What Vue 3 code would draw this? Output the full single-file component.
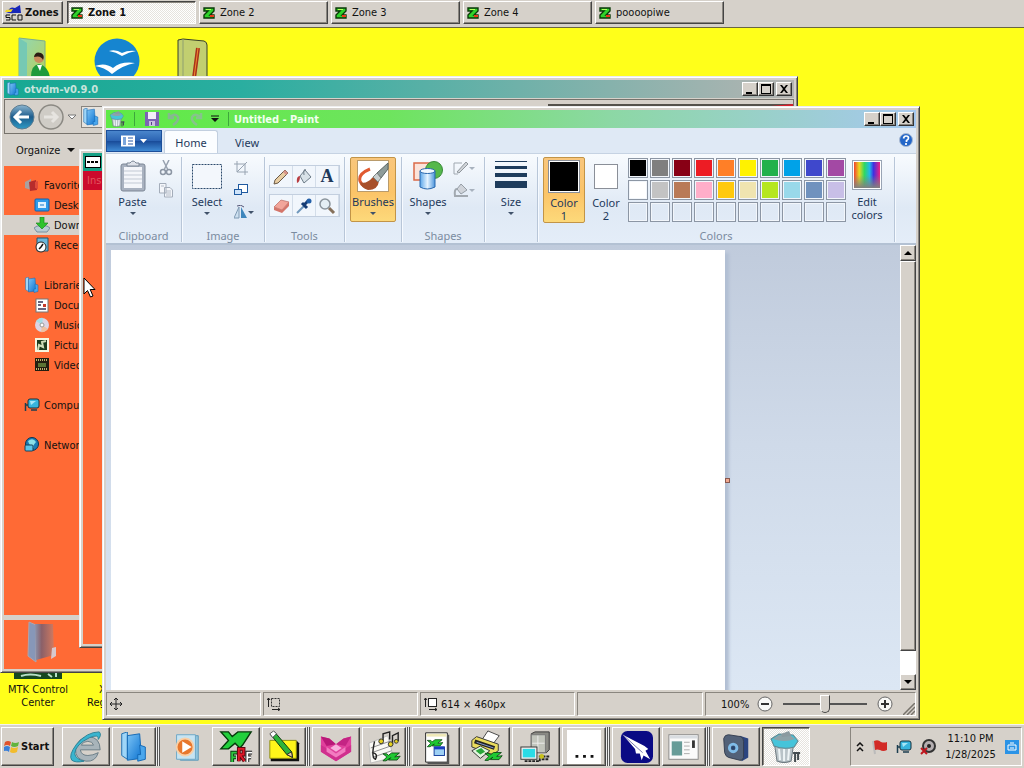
<template>
  <div class="screen">
    <svg class="defs" aria-hidden="true">
      <defs>
        <linearGradient id="blueGlass" x1="0" y1="0" x2="0" y2="1">
          <stop offset="0" stop-color="#8cb6d0" />
          <stop offset="0.5" stop-color="#1d5c8c" />
          <stop offset="1" stop-color="#2e9bc6" />
        </linearGradient>
        <linearGradient id="greenGlass" x1="0" y1="0" x2="1" y2="1">
          <stop offset="0" stop-color="#8fd8b8" />
          <stop offset="1" stop-color="#b9cf5a" />
        </linearGradient>
        <linearGradient id="folderBlue" x1="0" y1="0" x2="1" y2="1">
          <stop offset="0" stop-color="#7cc4f6" />
          <stop offset="1" stop-color="#0b72d0" />
        </linearGradient>
        <linearGradient id="darkFolder" x1="0" y1="0" x2="1" y2="0">
          <stop offset="0" stop-color="#8a93ad" />
          <stop offset="0.35" stop-color="#8b6068" />
          <stop offset="1" stop-color="#d07a60" />
        </linearGradient>
        <linearGradient id="rainbow">
          <stop offset="0" stop-color="#f04030" />
          <stop offset="0.2" stop-color="#e8d820" />
          <stop offset="0.4" stop-color="#30d860" />
          <stop offset="0.6" stop-color="#20b8e8" />
          <stop offset="0.75" stop-color="#4030e0" />
          <stop offset="1" stop-color="#f02080" />
        </linearGradient>
        <linearGradient id="fadeGray" x1="0" y1="0" x2="0" y2="1">
          <stop offset="0.5" stop-color="#808080" stop-opacity="0" />
          <stop offset="1" stop-color="#808080" />
        </linearGradient>
        <linearGradient id="cylinder">
          <stop offset="0" stop-color="#5aa6ea" />
          <stop offset="0.5" stop-color="#e4f3ff" />
          <stop offset="1" stop-color="#4a94dc" />
        </linearGradient>
      </defs>
      <symbol id="i-zone" viewBox="0 0 12 12">
        <path d="M1 1H11V4L7 8H11V11H1V8L5 4H1Z" fill="#2fd32a" stroke="#0b3a08" stroke-width="1.4" />
        <path d="M7 8H11V10H7Z" fill="#e83a1a" />
        <path d="M3 2.5H8" stroke="#b8ff60" />
      </symbol>
      <symbol id="i-bin" viewBox="0 0 32 32">
        <path d="M5 10L8 30Q15 33 22 30L25 10Z" fill="#b9c3c8" stroke="#6e7a80" />
        <path d="M10 18L11 29M15 18V30M20 18L19 29" stroke="#eef4f6" stroke-width="2" />
        <path d="M2 8L10 3L24 4L29 10L25 16Q15 19 5 15Z" fill="#45c4da" stroke="#5f8790" />
        <path d="M4 8L10 4L22 5L26 8Q15 12 4 8Z" fill="#8ea2a8" />
        <path d="M12 3L20 0L22 5L13 6Z" fill="#8b9aa0" />
        <path d="M26 21V31M29 21V29M24 22H31" stroke="#444c50" stroke-width="2" />
      </symbol>
      <symbol id="i-folder" viewBox="0 0 32 32">
        <path d="M3 2L9 0V29L3 25Z" fill="#9fd6f8" stroke="#1d6db0" />
        <path d="M9 4L22 2L24 28L9 30Z" fill="url(#folderBlue)" stroke="#1267b4" />
        <path d="M22 14L28 16V29L20 31V24H23Z" fill="#4aa6ec" stroke="#1267b4" />
      </symbol>
      <symbol id="i-pc" viewBox="0 0 16 16">
        <rect x="4" y="2" width="11" height="9" rx="2" fill="#37b4dc" stroke="#16303c" />
        <path d="M6 4H12L7 8Z" fill="#a5e6f6" />
        <path d="M7 13H13M1.500 6V14M1 8H4" stroke="#1c3e50" stroke-width="1.500" />
      </symbol>
      <symbol id="i-net" viewBox="0 0 16 16">
        <circle cx="8" cy="7" r="6.500" fill="#1b7cb6" stroke="#0c3350" />
        <path d="M4 4Q9 0 12 5Q8 9 10 11Q6 10 4 4Z" fill="#8be0e8" />
        <rect x="1" y="8" width="8" height="6" rx="1" fill="#5cc3e8" stroke="#17425a" />
      </symbol>
      <symbol id="i-xv" viewBox="0 0 24 12">
        <path d="M1 2H6L8 4L12 1H22L16 6L23 5L19 10H8L11 7L5 11H1L6 6Z" fill="#1fc832" stroke="#063b0c" />
      </symbol>
    </svg>

    <header class="zones-bar">
      <button class="raised zones-btn">
        <svg width="18" height="16" viewBox="0 0 18 16">
          <path d="M3 6Q5 1 10 3L15 0L16 8L9 8Q5 9 1 7Z" fill="#1726b8" />
          <path d="M1 5L8 4L6 7H0Z" fill="#f1d928" />
          <path d="M5 10H1V12.500H5V15H1M11 10H7V15H11M13 10H17V15H13Z" fill="none" stroke="#111" />
        </svg>
        Zones
      </button>
      <nav class="zone-tabs">
        <button v-for="(zone, i) in zones" :key="zone" class="zone-tab" :class="i === activeZone ? 'pressed' : 'raised'" @click="activeZone = i">
          <svg width="12" height="12"><use href="#i-zone" /></svg>
          {{ zone }}
        </button>
      </nav>
    </header>

    <main class="desktop">
      <svg class="desk-icon user" viewBox="0 0 36 40">
        <path d="M2 1L28 4V40H2Z" fill="url(#greenGlass)" stroke="#7dae8c" />
        <path d="M2 1L10 6V40H2Z" fill="#76c9b4" />
        <circle cx="22" cy="21" r="5" fill="#c98d5e" />
        <path d="M17 20Q18 14 24 16Q28 18 26 23Q24 18 17 20Z" fill="#2b1c12" />
        <path d="M14 40Q14 28 22 27Q31 29 33 40Z" fill="#1f9a3c" />
        <path d="M20 28L23 34L25 28Z" fill="#fff" />
      </svg>
      <svg class="desk-icon office" viewBox="0 0 46 46">
        <circle cx="23" cy="23" r="22.500" fill="#1685d0" />
        <path d="M15 13Q22 11 28 15Q34 12 42 13Q35 14 28 18Q22 14 15 13ZM1 28Q11 24 19 30Q27 23 41 25Q29 27 18 36Q10 29 1 28Z" fill="#fff" />
      </svg>
      <svg class="desk-icon book" viewBox="0 0 32 40">
        <path d="M1 2L6 1L27 3Q30 4 30 7V40H1Z" fill="#c2cf70" stroke="#38402a" />
        <path d="M6 1V40" stroke="#8fa070" />
        <path d="M21 10L17 40" stroke="#a8321a" stroke-width="4" />
        <path d="M21 10L17 40" stroke="#f08a30" />
      </svg>
      <div class="desk-item mtk">
        <svg width="48" height="10" viewBox="0 0 48 10">
          <rect width="48" height="10" fill="#16481f" />
          <path d="M7 7Q16 4 27 7M34 5L38 8M42 4V8" stroke="#b8e0c8" stroke-width="2" fill="none" />
        </svg>
        <span>MTK Control Center</span>
      </div>
      <div class="desk-item reg"><span>XV</span><span>Reg</span></div>

      <section class="window explorer">
        <div class="titlebar teal">
          <svg width="14" height="16" viewBox="0 0 32 32"><use href="#i-folder" /></svg>
          <h2>otvdm-v0.9.0</h2>
          <WindowButtons />
        </div>
        <div class="nav-row">
          <button class="round" aria-label="Back">
            <svg width="26" height="26" viewBox="0 0 26 26">
              <circle cx="13" cy="13" r="12" fill="url(#blueGlass)" stroke="#5e7c90" />
              <path d="M12 7L6 13L12 19M7 13H20" fill="none" stroke="#fff" stroke-width="3" />
            </svg>
          </button>
          <button class="round" aria-label="Forward">
            <svg width="26" height="26" viewBox="0 0 26 26">
              <circle cx="13" cy="13" r="12" fill="#cfccc6" stroke="#8b8983" stroke-width="1.500" />
              <path d="M14 8L19 13L14 18M6 13H18" fill="none" stroke="#e6e4e0" stroke-width="3" />
            </svg>
          </button>
          <svg width="10" height="6" viewBox="0 0 10 6"><path d="M1 1H9L5 5Z" fill="#fff" stroke="#777" /></svg>
          <div class="address">
            <svg width="18" height="18" viewBox="0 0 32 32"><use href="#i-folder" /></svg>
          </div>
          <div class="search"></div>
        </div>
        <div class="organize-row">
          <button class="plain">Organize <span class="caret"></span></button>
          <span class="dash"></span>
        </div>
        <ul class="tree">
          <li v-for="item in tree" :key="item.label" :class="[item.kind, { selected: item.selected }]">
            <svg width="16" height="16" viewBox="0 0 16 16">
              <template v-if="item.icon === 'fav'">
                <path d="M1 5L7 2V13L1 11Z" fill="#a8a0a0" /><path d="M5 5L12 3L13 13L6 14Z" fill="#b62c2c" /><path d="M11 5L14 4V12L11 11Z" fill="#e04a3a" />
              </template>
              <template v-else-if="item.icon === 'desk'">
                <rect x="1" y="2" width="14" height="12" rx="1" fill="#2f9bea" stroke="#0f5fae" /><rect x="4" y="5" width="8" height="6" fill="#dff2ff" /><path d="M6 8H10" stroke="#1a78c8" />
              </template>
              <template v-else-if="item.icon === 'down'">
                <path d="M0 11L3 9H13L16 11L13 15H3Z" fill="#b8ccd4" stroke="#7890a0" /><path d="M6 0H10V6H14L8 12L2 6H6Z" fill="#2dc32d" stroke="#1d8a20" stroke-width="0.700" />
              </template>
              <template v-else-if="item.icon === 'recent'">
                <path d="M3 1H14V14H3Z" fill="#6cb6da" stroke="#24566e" /><circle cx="7" cy="10" r="5" fill="#fff" stroke="#222" /><path d="M9 7L7 10L5 12" fill="none" stroke="#111" stroke-width="1.500" />
              </template>
              <use v-else-if="item.icon === 'lib'" href="#i-folder" />
              <template v-else-if="item.icon === 'docs'">
                <rect x="2" y="2" width="12" height="13" fill="#fff" stroke="#777" /><path d="M4 5H9M4 8H7M4 12H12" stroke="#335" stroke-width="1.500" /><path d="M9 7H12V10H9Z" fill="#c63a2a" />
              </template>
              <template v-else-if="item.icon === 'music'">
                <circle cx="8" cy="8" r="7" fill="#dcd4e4" /><path d="M8 8L2 4Q6 0 9 1Z" fill="#a6dce6" /><path d="M8 8L14 12Q10 16 7 15Z" fill="#f0c0a0" /><circle cx="8" cy="8" r="2" fill="#fff" stroke="#999" />
              </template>
              <template v-else-if="item.icon === 'pics'">
                <rect x="1" y="1" width="14" height="14" fill="#f6f6e0" /><rect x="3" y="3" width="10" height="10" fill="#1d3a1c" /><path d="M4 13L5 8L9 10L8 5L12 4" stroke="#d0deb8" fill="none" stroke-width="2" />
              </template>
              <template v-else-if="item.icon === 'video'">
                <rect x="1" y="1" width="14" height="13" fill="#241e10" /><path d="M2 3H14M2 12H14" stroke="#c0b070" stroke-dasharray="1 1" stroke-width="2" /><path d="M4 6H12V10H4Z" fill="#5c7434" />
              </template>
              <use v-else-if="item.icon === 'pc'" href="#i-pc" />
              <use v-else href="#i-net" />
            </svg>
            {{ item.label }}
          </li>
        </ul>
        <div class="details">
          <svg width="34" height="42" viewBox="0 0 34 42">
            <path d="M5 1L12 4V41L4 35Z" fill="#8797b8" stroke="#b0a4ac" />
            <path d="M11 3L29 3L30 34L12 39Z" fill="url(#darkFolder)" />
            <path d="M28 27L32 26V35L27 38" fill="#d8c8cc" />
          </svg>
        </div>
      </section>

      <section class="window installer">
        <div class="installer-title">
          <svg width="16" height="12" viewBox="0 0 16 12"><rect x="0.500" y="0.500" width="15" height="11" fill="#fff" stroke="#000" /><path d="M2 6H9M10 6H14" stroke="#000" stroke-width="2" stroke-dasharray="3 1" /></svg>
        </div>
        <div class="installer-head">Ins</div>
      </section>

      <section class="window paint">
        <div class="titlebar lime">
          <svg width="18" height="16" viewBox="0 0 32 32"><use href="#i-bin" /></svg>
          <span class="bar"></span>
          <button class="plain quick" aria-label="Save">
            <svg width="14" height="14" viewBox="0 0 14 14"><path d="M0 0H14V14H0Z" fill="#7c62b4" /><path d="M3 0H11V7H3Z" fill="#f2eef8" /><path d="M4 9H10V14H4Z" fill="#c9bfe0" /><path d="M6 10H7V13H6Z" fill="#54408a" /></svg>
          </button>
          <button class="plain quick" aria-label="Undo">
            <svg width="14" height="14" viewBox="0 0 14 14"><path d="M2 1V6H7M2 6Q8 0 11 5Q12 9 6 13" fill="none" stroke="#86b890" stroke-width="2.500" /></svg>
          </button>
          <button class="plain quick" aria-label="Redo">
            <svg width="14" height="14" viewBox="0 0 14 14"><path d="M12 1V6H7M12 6Q6 0 3 5Q2 9 8 13" fill="none" stroke="#86c48c" stroke-width="2.500" /></svg>
          </button>
          <button class="plain quick" aria-label="Customize">
            <svg width="8" height="8" viewBox="0 0 8 8"><path d="M0 1H8" stroke="#111" /><path d="M0 3H8L4 7Z" fill="#111" /></svg>
          </button>
          <span class="bar"></span>
          <h1>Untitled - Paint</h1>
          <WindowButtons />
        </div>

        <div class="tabs">
          <button class="file-btn" aria-label="Paint menu">
            <svg width="26" height="12" viewBox="0 0 26 12"><rect x="0" y="0.500" width="14" height="11" fill="#fff" /><path d="M2 2H5V10H2Z" fill="#7ba6dc" /><path d="M7 3H12M7 6H12M7 9H12" stroke="#2a5aa8" /><path d="M19 4H26L22.500 8Z" fill="#fff" /></svg>
          </button>
          <button class="tab active">Home</button>
          <button class="tab">View</button>
          <button class="plain help" aria-label="Help">
            <svg width="14" height="14" viewBox="0 0 14 14"><circle cx="7" cy="7" r="6.500" fill="#2366c8" stroke="#a8b8d0" /><path d="M4.500 5.500Q5 3 7 3Q9.500 3 9.500 5Q9.500 6.500 7.500 7.500V9M7 10V12" stroke="#fff" stroke-width="1.700" fill="none" /></svg>
          </button>
        </div>

        <div class="ribbon">
          <div class="group clipboard">
            <div class="tools">
              <button class="big">
                <svg width="26" height="32" viewBox="0 0 26 32">
                  <rect x="1" y="4" width="24" height="27" rx="2" fill="#a9b2c0" stroke="#7c8796" />
                  <rect x="4" y="7" width="18" height="21" fill="#f4f6fa" />
                  <path d="M4 11H22M4 15H22M4 19H22M4 23H22" stroke="#c2c9d4" />
                  <path d="M7 6V3H10Q13 -1 16 3H19V6Z" fill="#dfe3ea" stroke="#7c8796" />
                </svg>
                <span>Paste</span><i class="drop"></i>
              </button>
              <div class="small-col">
                <button class="plain" aria-label="Cut"><svg width="16" height="16" viewBox="0 0 16 16"><path d="M5 0L10 10M11 0L6 10" stroke="#98a2b0" stroke-width="1.500" /><circle cx="5" cy="12" r="2.500" fill="none" stroke="#8c96a4" stroke-width="1.500" /><circle cx="11" cy="12" r="2.500" fill="none" stroke="#8c96a4" stroke-width="1.500" /></svg></button>
                <button class="plain" aria-label="Copy"><svg width="16" height="16" viewBox="0 0 16 16"><path d="M1.500 1.500H8V11H1.500ZM6.500 5.500H12L14.500 8V15H6.500Z" fill="#f4f6fa" stroke="#a4adba" /><path d="M8 9H13M8 11H13M8 13H13M3 4H6" stroke="#b4bcc8" /></svg></button>
              </div>
            </div>
            <div class="caption">Clipboard</div>
          </div>

          <div class="group image">
            <div class="tools">
              <button class="big">
                <svg width="32" height="32" viewBox="0 0 32 32"><rect x="1.500" y="4.500" width="29" height="24" fill="#f3f7fc" stroke="#2c4a6c" stroke-dasharray="2 1" /></svg>
                <span>Select</span><i class="drop"></i>
              </button>
              <div class="small-col">
                <button class="plain" aria-label="Crop"><svg width="14" height="14" viewBox="0 0 14 14"><path d="M3 0V11H14M0 3H11V14M3 11L13 1" fill="none" stroke="#98a4b2" /></svg></button>
                <button class="plain" aria-label="Resize"><svg width="14" height="14" viewBox="0 0 14 14"><rect x="4.500" y="1.500" width="9" height="8" fill="#fff" stroke="#1f5aa0" /><rect x="0.500" y="6.500" width="7" height="5" fill="#cfe4fa" stroke="#1f5aa0" /></svg></button>
                <button class="plain with-drop" aria-label="Rotate"><svg width="14" height="14" viewBox="0 0 14 14"><path d="M7 2V13H13Z" fill="#3e86bc" /><path d="M5 2V13H0Z" fill="#cde0f0" stroke="#7f9ab4" /><path d="M3 1Q7 -1 10 2" fill="none" stroke="#557" /></svg><i class="drop"></i></button>
              </div>
            </div>
            <div class="caption">Image</div>
          </div>

          <div class="group toolset">
            <div class="tools rows">
              <div class="tool-row">
                <button aria-label="Pencil"><svg width="18" height="18" viewBox="0 0 18 18"><path d="M3 12L13 2L16 5L6 15L2 16Z" fill="#e8cda2" stroke="#6a5a48" /><path d="M13 2L16 5L14 7L11 4Z" fill="#d8938a" /></svg></button>
                <button aria-label="Fill"><svg width="18" height="18" viewBox="0 0 18 18"><path d="M5 8L10 2L16 9L9 15Z" fill="#d8e2e8" stroke="#6d7c88" /><path d="M9 7Q8 0 11 2" fill="none" stroke="#6d7c88" /><path d="M5 8Q1 8 2 15Q5 14 5 8L8 6Z" fill="#b83c40" /></svg></button>
                <button class="letter" aria-label="Text">A</button>
              </div>
              <div class="tool-row">
                <button aria-label="Eraser"><svg width="18" height="18" viewBox="0 0 18 18"><path d="M2 10L9 3L17 5L10 13Z" fill="#f2a59a" stroke="#b86a62" stroke-width="0.700" /><path d="M2 10L10 13V16L2 13ZM10 13L17 5V9L10 16Z" fill="#d4756a" /></svg></button>
                <button aria-label="Color picker"><svg width="18" height="18" viewBox="0 0 18 18"><path d="M2 16L9 9" stroke="#7098bc" stroke-width="2" /><path d="M7 6L12 11M9 8L13 4" stroke="#163c74" stroke-width="3" /><circle cx="14" cy="4" r="2.500" fill="#2460a8" /></svg></button>
                <button aria-label="Magnifier"><svg width="18" height="18" viewBox="0 0 18 18"><circle cx="7" cy="7" r="5" fill="#e4eef4" stroke="#8a949c" stroke-width="1.500" /><path d="M11 11L16 16" stroke="#85705a" stroke-width="3" /></svg></button>
              </div>
            </div>
            <div class="caption">Tools</div>
          </div>

          <div class="group brush">
            <button class="big hot">
              <svg width="32" height="32" viewBox="0 0 32 32">
                <rect x="0.500" y="0.500" width="31" height="31" fill="#fff" stroke="#b99b6c" />
                <path d="M13 9Q1 14 3 21Q5 27 14 28" fill="none" stroke="#e05a30" stroke-width="3" />
                <path d="M31 3L20 13L24 18L31 9Z" fill="#8f9c9a" stroke="#5b6664" />
                <path d="M16 17L22 21Q21 30 11 30Q4 28 3 22Q9 25 16 17Z" fill="#a8502a" />
                <path d="M16 17L20 13L24 18L21 22Z" fill="#c9cfd0" stroke="#7d8482" />
              </svg>
              <span>Brushes</span><i class="drop"></i>
            </button>
          </div>

          <div class="group shapes">
            <div class="tools">
              <button class="big">
                <svg width="32" height="32" viewBox="0 0 32 32">
                  <rect x="2" y="3" width="17" height="17" fill="#fbe3da" stroke="#da6a48" stroke-width="1.500" />
                  <circle cx="22" cy="10" r="8.500" fill="#55b84c" stroke="#388a38" />
                  <path d="M8 11V27Q15 31 23 27V11Z" fill="url(#cylinder)" stroke="#2a68ae" />
                  <ellipse cx="15.500" cy="11" rx="7.500" ry="2.500" fill="#f0f8ff" stroke="#2a68ae" />
                </svg>
                <span>Shapes</span><i class="drop"></i>
              </button>
              <div class="small-col">
                <button class="plain with-drop" aria-label="Outline"><svg width="16" height="16" viewBox="0 0 16 16"><path d="M9 3H1V14H5" fill="none" stroke="#a0a8b0" /><path d="M4 12L13 2L15 4L6 13Z" fill="#d0d4d8" stroke="#8f969c" /></svg><i class="drop dim"></i></button>
                <button class="plain with-drop" aria-label="Fill shape"><svg width="16" height="16" viewBox="0 0 16 16"><path d="M4 7L8 2L14 8L8 12Z" fill="#d0d4da" stroke="#969ea6" /><path d="M4 7Q1 7 2 14H15" fill="none" stroke="#a2a9b0" stroke-width="2" /></svg><i class="drop dim"></i></button>
              </div>
            </div>
            <div class="caption">Shapes</div>
          </div>

          <div class="group size">
            <button class="big">
              <svg width="32" height="32" viewBox="0 0 32 32" fill="#1e3c5c"><rect y="1" width="32" height="1" /><rect y="6" width="32" height="3" /><rect y="13" width="32" height="4" /><rect y="21" width="32" height="7" /></svg>
              <span>Size</span><i class="drop"></i>
            </button>
          </div>

          <div class="group colors">
            <div class="tools">
              <button class="big hot slot"><span class="swatch black"></span><span>Color<br />1</span></button>
              <button class="big slot"><span class="swatch white"></span><span>Color<br />2</span></button>
              <div class="palette">
                <button v-for="(color, i) in palette" :key="i" :aria-label="'Color ' + color" :style="{ backgroundColor: color }"></button>
              </div>
              <button class="big edit">
                <svg width="30" height="32" viewBox="0 0 30 32"><rect x="0.500" y="0.500" width="29" height="29" fill="#fff" stroke="#98a4b4" /><rect x="2" y="2" width="26" height="26" fill="url(#rainbow)" /><rect x="2" y="2" width="26" height="26" fill="url(#fadeGray)" /></svg>
                <span>Edit<br />colors</span>
              </button>
            </div>
            <div class="caption">Colors</div>
          </div>
        </div>

        <div class="work">
          <div class="stage">
            <div class="sheet">
              <div class="paper"></div>
              <span class="handle"></span>
            </div>
          </div>
          <div class="scrollbar">
            <button class="raised" aria-label="Scroll up"><svg width="8" height="4"><path d="M0 4H8L4 0Z" /></svg></button>
            <div class="thumb raised"></div>
            <button class="raised" aria-label="Scroll down"><svg width="8" height="4"><path d="M0 0H8L4 4Z" /></svg></button>
          </div>
        </div>

        <footer class="status">
          <div class="cell"><svg width="12" height="12" viewBox="0 0 12 12"><path d="M6 0V12M0 6H12M4 2L6 0L8 2M4 10L6 12L8 10M2 4L0 6L2 8M10 4L12 6L10 8" fill="none" stroke="#222" /></svg></div>
          <div class="cell"><svg width="14" height="14" viewBox="0 0 14 14"><path d="M1.500 1V10M0 3L1.500 1L3 3M5 12.500H13M11 11L13 12.500L11 14" fill="none" stroke="#222" /><rect x="4.500" y="1.500" width="8" height="8" fill="none" stroke="#333" stroke-dasharray="2 1" /></svg></div>
          <div class="cell"><svg width="14" height="14" viewBox="0 0 14 14"><path d="M1.500 1V10M0 3L1.500 1L3 3M5 12.500H13M11 11L13 12.500L11 14" fill="none" stroke="#222" /><rect x="4.500" y="1.500" width="8" height="8" fill="#fff" stroke="#222" /></svg>614 × 460px</div>
          <div class="cell short"></div>
          <div class="cell zoom">
            <label for="zoom">{{ zoom }}%</label>
            <button class="plain" aria-label="Zoom out"><svg width="16" height="16" viewBox="0 0 16 16"><circle cx="8" cy="8" r="7" fill="#f8f8f6" stroke="#666" /><path d="M4 8H12" stroke="#333" stroke-width="2" /></svg></button>
            <input id="zoom" v-model="zoom" type="range" min="0" max="200" />
            <button class="plain" aria-label="Zoom in"><svg width="16" height="16" viewBox="0 0 16 16"><circle cx="8" cy="8" r="7" fill="#f8f8f6" stroke="#666" /><path d="M4 8H12M8 4V12" stroke="#333" stroke-width="2" /></svg></button>
            <svg class="grip" width="12" height="12" viewBox="0 0 12 12"><path d="M0 12L12 0M4 12L12 4M8 12L12 8" stroke="#77736c" stroke-width="1.500" /></svg>
          </div>
        </footer>
      </section>

      <svg class="cursor" width="13" height="21" viewBox="0 0 13 21"><path d="M1 1V17L4.500 13.500L7.500 20L10 19L7.200 12.500H12Z" fill="#fff" stroke="#000" /></svg>
    </main>

    <footer class="taskbar">
      <button class="raised start">
        <svg width="16" height="16" viewBox="0 0 16 16"><path d="M1 3Q4 1 7 3L6 7Q3 5 0 7Z" fill="#e0522c" /><path d="M8 3Q11 5 15 3L14 7Q10 9 7 7Z" fill="#62b43c" /><path d="M0 8Q3 6 6 8L5 13Q3 11 0 12Z" fill="#3a7fd8" /><path d="M7 8Q10 10 14 8L13 13Q9 15 6 13Z" fill="#f2bc2c" /></svg>
        Start
      </button>
      <nav class="tasks">
        <button v-for="task in tasks" :key="task.id" class="task" :class="task.look" :aria-label="task.id">
          <svg width="34" height="34" viewBox="0 0 36 36">
            <template v-if="task.id === 'browser'">
              <path d="M33 21H12Q13 27 20 27Q25 27 31 24Q28 34 18 33Q6 31 7 20Q9 8 21 7Q33 8 33 21ZM13 16H26Q25 12 20 12Q15 12 13 16Z" fill="#a8b4ba" stroke="#697c86" />
              <path d="M3 32Q-1 27 8 15Q19 2 32 2Q35 5 31 10Q32 4 22 8Q7 15 6 25Q7 31 16 33Q7 35 3 32Z" fill="#39b5cf" stroke="#2b8296" />
            </template>
            <svg v-else-if="task.id === 'folder'" x="1" y="2" width="34" height="32" viewBox="0 0 32 32"><use href="#i-folder" /></svg>
            <template v-else-if="task.id === 'player'">
              <path d="M12 6H31V32H12Z" fill="#8fc4dc" stroke="#5e9aba" /><path d="M8 5H28V31H8Z" fill="#c6e4f2" stroke="#6ba7c6" />
              <circle cx="17" cy="18" r="9" fill="#e8772c" stroke="#f8d0a8" stroke-width="2" /><path d="M14 12L24 18L14 24Z" fill="#fff" />
            </template>
            <template v-else-if="task.id === 'xvfrf'">
              <path d="M2 2H10L14 7L20 2H34L25 16L22 19L17 14L10 20H2L10 11Z" fill="#22d03c" stroke="#053a0a" stroke-width="1.500" />
              <path d="M14 34V24H20M14 29H18" fill="none" stroke="#0a3a10" stroke-width="4" /><path d="M14 34V24H20M14 29H18" fill="none" stroke="#2fc840" stroke-width="2" />
              <path d="M21 33V20H26V26H22L27 33" fill="none" stroke="#5c0610" stroke-width="4" /><path d="M21 33V20H26V26H22L27 33" fill="none" stroke="#e01828" stroke-width="2" />
              <path d="M30 34V24H35M30 29H34" fill="none" stroke="#111" stroke-width="4" /><path d="M30 34V24H35M30 29H34" fill="none" stroke="#fff" stroke-width="2" />
            </template>
            <template v-else-if="task.id === 'notes'">
              <path d="M4 12H32L34 14V33H4Z" fill="#111" /><path d="M3 11H31V30H3Z" fill="#fff61a" stroke="#8c8c12" />
              <path d="M4 5L8 2L26 23L27 29L21 26Z" fill="#2cb43a" stroke="#0c3010" /><path d="M3 4L7 1L10 4L6 8Z" fill="#fff" stroke="#555" /><path d="M21 26L26 23L27 29Z" fill="#e9cda0" stroke="#222" />
            </template>
            <template v-else-if="task.id === 'box'">
              <path d="M2 7L11 9L18 15L26 9L34 7V23L18 33L2 23Z" fill="#e0409c" /><path d="M2 7L11 9L18 15L8 17Z" fill="#b81878" /><path d="M34 7L26 9L18 15L28 17Z" fill="#c42484" /><path d="M2 16L18 25L34 16V23L18 33L2 23Z" fill="#d0308e" /><path d="M8 18L18 25L28 18V23L18 29L8 23Z" fill="#f27cc0" /><path d="M12 19L18 15L24 19L18 23Z" fill="#f8b0dc" />
            </template>
            <template v-else-if="task.id === 'music'">
              <path d="M2 14L22 6L28 29L4 35Z" fill="#faf9f4" stroke="#bbb" /><path d="M4 19L24 12M5 24L25 17M6 29L26 22" stroke="#888" />
              <path d="M8 12Q4 30 9 31Q12 25 6 24M17 12V4L24 2V10M27 15V6L33 3V12" fill="none" stroke="#222" stroke-width="1.500" />
              <circle cx="15" cy="12" r="2.500" fill="#e6d020" stroke="#333" /><circle cx="25" cy="15" r="2.500" fill="#e6d020" stroke="#333" /><circle cx="31" cy="12" r="2" fill="#e6d020" stroke="#333" />
              <svg x="16" y="23" width="20" height="11"><use href="#i-xv" /></svg>
            </template>
            <template v-else-if="task.id === 'sheet'">
              <path d="M7 3H30V34H7Z" fill="#fff" stroke="#222" /><path d="M8 4H29V7H8Z" fill="#efe9b8" /><path d="M31 5V35H9" fill="none" stroke="#555" stroke-width="2" />
              <svg x="8" y="9" width="18" height="10"><use href="#i-xv" /></svg><rect x="16" y="18" width="11" height="9" fill="#9ed0f4" stroke="#123c9c" /><path d="M16 19H27" stroke="#1a3ec0" stroke-width="3" />
            </template>
            <template v-else-if="task.id === 'printer'">
              <path d="M14 10L20 1L32 6L26 14Z" fill="#fff" stroke="#444" /><path d="M3 11L8 7L31 15V22L25 26L3 18Z" fill="#eadb5e" stroke="#333" /><path d="M6 12L27 19" stroke="#222" stroke-width="4" /><path d="M8 13L26 19" stroke="#8aa0d8" />
              <path d="M3 22L12 17L22 22L12 30Z" fill="#e4f6e0" stroke="#333" /><path d="M7 22L13 19L17 23L12 26Z" fill="#2aa63a" /><svg x="16" y="22" width="20" height="12"><use href="#i-xv" /></svg>
            </template>
            <template v-else-if="task.id === 'network'">
              <path d="M13 4L17 2H32V21L29 24H13Z" fill="#8a8a84" stroke="#333" /><path d="M13 5H28V24H13Z" fill="#c2c5bc" stroke="#777" /><path d="M20 6V23M14 14H27" stroke="#eee" />
              <rect x="2" y="18" width="17" height="13" fill="#eee" stroke="#333" /><rect x="4" y="20" width="13" height="9" fill="#2adbe6" /><path d="M6 33H22V28H32M24 31H32" fill="none" stroke="#222" stroke-width="2" stroke-dasharray="3 1" /><circle cx="24" cy="28" r="2.500" fill="#c7c01a" />
            </template>
            <template v-else-if="task.id === 'dots'">
              <rect width="36" height="36" fill="#fff" /><path d="M9 28H12M17 28H20M25 28H28" stroke="#111" stroke-width="3" />
            </template>
            <template v-else-if="task.id === 'plane'">
              <rect x="2" y="1" width="34" height="34" rx="7" fill="#0a0a84" /><path d="M4 5L27 17L31 20L28 22L33 31L26 27L24 32L22 25L18 25L17 20Z" fill="#fff" /><path d="M4 5L25 24" stroke="#7070a8" />
            </template>
            <template v-else-if="task.id === 'panel'">
              <rect x="2" y="5" width="31" height="26" fill="#fafafa" stroke="#888" /><path d="M3 6H32V9H3Z" fill="#d8dce0" /><rect x="5" y="12" width="11" height="15" fill="#679c98" /><path d="M18 13H24M18 17H24M18 21H24M18 25H24" stroke="#aaa" /><path d="M28 11V19" stroke="#333" stroke-width="3" />
            </template>
            <template v-else-if="task.id === 'disc'">
              <path d="M22 6L31 9V29L24 33Z" fill="#2b4580" /><path d="M5 9Q6 5 10 5L23 7Q26 8 26 12V29Q25 33 22 32L10 29Q7 28 6 24Z" fill="#526178" stroke="#343e50" /><circle cx="15" cy="19" r="4" fill="none" stroke="#7fbce8" stroke-width="3" /><circle cx="15" cy="19" r="2" fill="#254470" />
            </template>
            <svg v-else x="0" y="1" width="34" height="34" viewBox="0 0 32 32"><use href="#i-bin" /></svg>
          </svg>
        </button>
      </nav>
      <div class="tray">
        <svg width="8" height="10" viewBox="0 0 8 10"><path d="M1 4L4 1L7 4M1 9L4 6L7 9" fill="none" stroke="#111" stroke-width="1.500" /></svg>
        <svg width="16" height="16" viewBox="0 0 16 16"><path d="M1 2L3 15" stroke="#bbb" stroke-width="2" /><path d="M2 2Q6 0 9 3Q12 4 15 3V11Q11 13 8 11Q5 10 3 11Z" fill="#d22a26" /></svg>
        <svg width="16" height="16"><use href="#i-pc" /></svg>
        <svg width="16" height="16" viewBox="0 0 16 16"><circle cx="9" cy="7" r="6" fill="#b4aeb0" stroke="#333" stroke-width="2" /><circle cx="9" cy="7" r="2" fill="#222" /><path d="M1 9L7 15M7 9L1 15" stroke="#c0161e" stroke-width="2" /></svg>
        <time class="clock">11:10 PM<br />1/28/2025</time>
        <svg width="14" height="14" viewBox="0 0 14 14"><rect width="14" height="14" fill="#2b93e6" /><path d="M3 5H11V10H3Z" fill="none" stroke="#fff" /><path d="M5 8H9M5 3H9" stroke="#fff" /></svg>
      </div>
    </footer>
  </div>
</template>

<script setup>
import { ref, h } from "vue";

const zones = ["Zone 1", "Zone 2", "Zone 3", "Zone 4", "poooopiwe"];
const activeZone = ref(0);
const zoom = ref(100);

const tree = [
  { label: "Favorites", icon: "fav", kind: "root" },
  { label: "Desktop", icon: "desk" },
  { label: "Downloads", icon: "down", selected: true },
  { label: "Recent Places", icon: "recent" },
  { label: "Libraries", icon: "lib", kind: "root" },
  { label: "Documents", icon: "docs" },
  { label: "Music", icon: "music" },
  { label: "Pictures", icon: "pics" },
  { label: "Videos", icon: "video" },
  { label: "Computer", icon: "pc", kind: "root" },
  { label: "Network", icon: "net", kind: "root" },
];

const palette = [
  "#000000", "#7f7f7f", "#880015", "#ed1c24", "#ff7f27", "#fff200", "#22b14c", "#00a2e8", "#3f48cc", "#a349a4",
  "#ffffff", "#c3c3c3", "#b97a57", "#ffaec9", "#ffc90e", "#efe4b0", "#b5e61d", "#99d9ea", "#7092be", "#c8bfe7",
  ...Array(10).fill("transparent"),
];

const tasks = [
  { id: "browser", look: "raised" },
  { id: "folder", look: "raised stacked" },
  { id: "player", look: "flat" },
  { id: "xvfrf", look: "raised" },
  { id: "notes", look: "raised stacked" },
  { id: "box", look: "raised" },
  { id: "music", look: "raised stacked" },
  { id: "sheet", look: "raised" },
  { id: "printer", look: "raised" },
  { id: "network", look: "raised" },
  { id: "dots", look: "raised stacked" },
  { id: "plane", look: "raised" },
  { id: "panel", look: "raised stacked" },
  { id: "disc", look: "raised" },
  { id: "bin", look: "pressed" },
];

// minimize, maximize, close
const glyphs = {
  Minimize: "M1 8H7V10H1Z",
  Maximize: "M0 0H10V10H0ZM1 2V9H9V2Z",
  Close: "M1 1H3L5 3.500L7 1H9L6 5L9 9H7L5 6.500L3 9H1L4 5Z",
};

function WindowButtons() {
  return h(
    "div",
    { class: "win-buttons" },
    Object.keys(glyphs).map((name) =>
      h("button", { "aria-label": name }, [
        h("svg", { width: 10, height: 10, viewBox: "0 0 10 10" }, [
          h("path", { d: glyphs[name], "fill-rule": "evenodd" }),
        ]),
      ])
    )
  );
}
</script>

<style>
body {
  margin: 0;
  background: #ffff1a;
}

.win-buttons {
  display: flex;
  margin-left: auto;
}

.win-buttons button {
  display: flex;
  align-items: center;
  justify-content: center;
  width: 16px;
  height: 14px;
  padding: 0;
  box-sizing: border-box;
  background: #d6d1ca;
  border: 1px solid;
  border-color: #fff #333 #333 #fff;
  box-shadow: inset -1px -1px #88847e;
}

.win-buttons button:last-child {
  margin-left: 2px;
}
</style>

<style scoped>
.screen {
  display: flex;
  flex-direction: column;
  min-height: 100vh;
  overflow: hidden;
  font-family: "DejaVu Sans Condensed", "DejaVu Sans", sans-serif;
  font-size: 11px;
  line-height: 13px;
  color: #111;
}

.screen * {
  box-sizing: border-box;
}

button {
  font: inherit;
  color: inherit;
  margin: 0;
}

svg {
  flex: none;
}

.defs {
  position: absolute;
  width: 0;
  height: 0;
}

.raised {
  background: #d6d1ca;
  border: 1px solid;
  border-color: #fff #444 #444 #fff;
  box-shadow: inset -1px -1px #8a867f;
}

.pressed {
  background: repeating-conic-gradient(#fff 0 25%, #e6e3de 0 50%) 0 0 / 2px 2px;
  border: 1px solid;
  border-color: #444 #fff #fff #444;
  box-shadow: inset 1px 1px #8a867f;
}

.plain {
  padding: 0;
  border: none;
  background: none;
}

/* top bar */
.zones-bar {
  display: flex;
  gap: 4px;
  height: 28px;
  padding: 1px 2px;
  background: #d6d1ca;
  border-bottom: 1px solid #6a6640;
}

.zones-btn {
  display: flex;
  align-items: center;
  gap: 2px;
  width: 61px;
  height: 23px;
  padding: 0 2px;
  font-weight: bold;
}

.zone-tabs {
  display: flex;
  gap: 3px;
}

.zone-tab {
  display: flex;
  align-items: center;
  gap: 5px;
  width: 129px;
  height: 23px;
  padding: 0 3px;
}

.zone-tab.pressed {
  font-weight: bold;
}

/* desktop */
.desktop {
  position: relative;
  flex: 1;
  min-height: 696px;
  background: #ffff1a;
}

.desk-icon,
.desk-item,
.window,
.cursor {
  position: absolute;
}

.desk-icon.user {
  left: 17px;
  top: 9px;
  width: 36px;
}

.desk-icon.office {
  left: 94px;
  top: 10px;
  width: 46px;
}

.desk-icon.book {
  left: 177px;
  top: 10px;
  width: 32px;
}

.desk-item {
  display: flex;
  flex-direction: column;
  align-items: center;
  gap: 4px;
  text-align: center;
}

.desk-item.mtk {
  left: 3px;
  top: 641px;
  width: 70px;
}

.desk-item.reg {
  left: 87px;
  top: 655px;
  align-items: flex-start;
  gap: 0;
}

.reg span:first-child {
  padding-left: 12px;
}

.window {
  display: flex;
  flex-direction: column;
  padding: 3px;
  background: #d6d1ca;
  border: 1px solid;
  border-color: #eee #444 #444 #eee;
  box-shadow: inset 1px 1px #fff, inset -1px -1px #8a867f;
}

.titlebar {
  display: flex;
  align-items: center;
  flex: none;
  height: 18px;
  padding: 0 2px;
}

.titlebar h1,
.titlebar h2 {
  margin: 0;
  font-size: 11px;
  line-height: 13px;
}

.titlebar.teal {
  gap: 4px;
  background: linear-gradient(90deg, #17a892, #2aaea0 30%, #b4b4b2);
  color: #c8e4dc;
}

.titlebar.lime {
  background: linear-gradient(90deg, #5fea46, #6ee45e 35%, #8cd8a4 62%, #a6c8ee);
  color: #f2fff0;
}

/* file explorer */
.explorer {
  left: 0;
  top: 48px;
  width: 798px;
  height: 597px;
}

.nav-row {
  display: flex;
  align-items: center;
  gap: 3px;
  flex: none;
  height: 35px;
  margin-top: 1px;
  padding-left: 4px;
  border: 1px solid #77736c;
}

.round {
  display: flex;
  padding: 0;
  border: none;
  background: none;
}

.address {
  display: flex;
  align-items: center;
  flex: 1;
  height: 22px;
  margin-left: 1px;
  border: 1px solid #88847e;
  background: #e6e3de;
}

.search {
  align-self: flex-end;
  width: 245px;
  height: 29px;
  border-top: 2px solid #55524c;
  border-right: 22px solid #d8202c;
}

.organize-row {
  display: flex;
  align-items: center;
  gap: 20px;
  flex: none;
  height: 32px;
  padding-left: 12px;
}

.organize-row .plain {
  display: flex;
  align-items: center;
  gap: 7px;
}

.caret {
  border: 4px solid transparent;
  border-top-color: #111;
  border-bottom: none;
}

.dash {
  width: 4px;
  height: 1px;
  background: #333;
}

.tree {
  flex: 1;
  margin: 0;
  padding: 9px 0 0;
  list-style: none;
  background: #ff6a35;
}

.tree li {
  display: flex;
  align-items: center;
  gap: 4px;
  height: 20px;
  padding-left: 30px;
}

.tree li.root {
  padding-left: 20px;
}

.tree li.root:not(:first-child) {
  margin-top: 20px;
}

.tree li.selected {
  background: #d6d1ca;
}

.details {
  flex: none;
  height: 54px;
  padding: 1px 20px;
  border-top: 5px solid #d6d1ca;
  background: #ff6a35;
}

/* installer behind paint */
.installer {
  left: 79px;
  top: 121px;
  width: 300px;
  height: 499px;
}

.installer-title {
  display: flex;
  align-items: center;
  flex: none;
  height: 18px;
  padding-left: 2px;
  background: #16a085;
}

.installer-head {
  flex: none;
  height: 19px;
  padding: 3px 4px;
  background: #cc0a2c;
  color: #e2565e;
}

.installer::after {
  content: "";
  flex: 1;
  background: #ff6a35;
}

/* paint */
.paint {
  left: 102px;
  top: 78px;
  width: 818px;
  height: 614px;
}

.bar {
  width: 1px;
  height: 14px;
  margin: 0 6px 0 8px;
  background: #3da63c;
}

.quick {
  display: flex;
  justify-content: center;
  width: 22px;
}

.quick:nth-of-type(4) {
  width: 16px;
}

.quick + .bar {
  margin: 0 5px;
}

.tabs,
.ribbon {
  font-family: "Noto Sans", "Open Sans", sans-serif;
  color: #1e395b;
}

.tabs {
  display: flex;
  flex: none;
  height: 25px;
  padding: 2px 3px 0 0;
  background: #dfe9f5;
}

.file-btn {
  display: flex;
  align-items: center;
  justify-content: center;
  width: 56px;
  height: 22px;
  padding: 0;
  border: 1px solid #1c4f9a;
  background: linear-gradient(#4a86cc, #2a62b2 50%, #184a98 50%, #3f8ad4);
}

.tab {
  width: 54px;
  margin-left: 2px;
  padding: 0;
  border: 1px solid transparent;
  border-bottom: none;
  background: none;
}

.tab.active {
  border-color: #c2cfdf;
  border-radius: 3px 3px 0 0;
  background: #fbfdff;
}

.help {
  display: flex;
  margin-left: auto;
  padding-top: 3px;
}

.ribbon {
  display: flex;
  flex: none;
  height: 92px;
  padding: 3px 0 1px;
  border-top: 1px solid #c6d3e3;
  border-bottom: 2px solid #b3c1d3;
  background: linear-gradient(#f8fbfe, #dfe9f5 60%, #e4edf8);
}

.group {
  display: flex;
  flex-direction: column;
  justify-content: space-between;
  align-items: center;
  padding: 0 2px;
  border-right: 1px solid #b8c6d8;
  box-shadow: 1px 0 #f6faff;
}

.group.clipboard {
  width: 76px;
}

.group.image {
  width: 83px;
}

.group.toolset {
  width: 80px;
}

.group.brush {
  width: 57px;
}

.group.shapes {
  width: 83px;
}

.group.size {
  width: 53px;
}

.group.colors {
  width: 357px;
}

.tools {
  display: flex;
  gap: 2px;
}

.image .tools {
  gap: 4px;
}

.tools.rows {
  flex-direction: column;
  gap: 6px;
  padding-top: 8px;
}

.caption {
  color: #7b8ba0;
  line-height: 12px;
}

.big {
  display: flex;
  flex-direction: column;
  align-items: center;
  width: 46px;
  height: 65px;
  padding: 2px 0 0;
  border: 1px solid transparent;
  background: none;
}

.big span {
  margin-top: 3px;
  line-height: 13px;
}

.big.hot {
  border-color: #c29447;
  border-radius: 2px;
  background: linear-gradient(#f9c67c, #fbc468 55%, #fdd97a);
}

.drop {
  margin-top: 4px;
  border: 3px solid transparent;
  border-top-color: #40526a;
  border-bottom: none;
}

.small-col .drop {
  margin-top: 0;
}

.drop.dim {
  border-top-color: #a8b2be;
}

.small-col {
  display: flex;
  flex-direction: column;
  align-items: flex-start;
  gap: 6px;
  width: 28px;
  padding: 3px 0;
}

.clipboard .small-col {
  width: 20px;
}

.small-col .plain {
  display: flex;
  height: 16px;
  align-items: center;
}

.tool-row {
  display: flex;
  border: 1px solid #c3cfdf;
  background: #f1f6fc;
}

.tool-row button {
  display: flex;
  align-items: center;
  justify-content: center;
  width: 23px;
  height: 21px;
  padding: 0;
  border: none;
  border-right: 1px solid #d3dde9;
  background: none;
}

.tool-row .letter {
  font: bold 18px "Liberation Serif", serif;
}

.colors .tools {
  gap: 0;
  width: 100%;
  padding-left: 3px;
}

.big.slot {
  width: 42px;
  height: 66px;
}

.slot .swatch {
  width: 32px;
  height: 34px;
  margin: 0;
  border: 1px solid #8a8f98;
  box-shadow: inset 0 0 0 1px #fff;
}

.slot .swatch.black {
  background: #000;
}

.slot .swatch.white {
  width: 24px;
  height: 26px;
  margin: 4px 0;
  background: #fff;
}

.palette {
  display: grid;
  grid-template-columns: repeat(10, 20px);
  grid-auto-rows: 20px;
  gap: 2px;
  margin: 1px 0 0 1px;
}

.palette button {
  padding: 0;
  border: 1px solid #8c96a4;
  box-shadow: inset 0 0 0 1px #f2f6fb;
}

.big.edit {
  width: 42px;
}

/* canvas */
.work {
  display: flex;
  flex: 1;
  min-height: 0;
}

.stage {
  flex: 1;
  padding: 5px 0 0 5px;
  overflow: hidden;
  background: linear-gradient(#c0cbdc, #cfdae9 45%, #dce7f4);
}

.sheet {
  display: flex;
  align-items: center;
  height: 460px;
}

.paper {
  align-self: stretch;
  flex: 0 0 614px;
  background: #fff;
  box-shadow: 4px 3px 3px #b2bfd3;
}

.handle {
  width: 5px;
  height: 5px;
  border: 1px solid #8a5a50;
  background: #f0a890;
}

.scrollbar {
  display: flex;
  flex-direction: column;
  width: 16px;
  background: #fff;
}

.scrollbar button {
  display: flex;
  align-items: center;
  justify-content: center;
  height: 16px;
  padding: 0;
}

.thumb {
  flex: 1;
  margin-bottom: 23px;
}

.status {
  display: flex;
  gap: 2px;
  flex: none;
  height: 26px;
  padding-top: 2px;
}

.cell {
  display: flex;
  align-items: center;
  gap: 3px;
  width: 155px;
  padding-left: 3px;
  border: 1px solid;
  border-color: #8a867f #fff #fff #8a867f;
}

.cell.short {
  width: 126px;
}

.cell.zoom {
  flex: 1;
  gap: 8px;
  padding-left: 15px;
}

.zoom .plain {
  display: flex;
}

.zoom input {
  width: 84px;
  height: 18px;
  margin: 0 2px;
  appearance: none;
  background: linear-gradient(#555, #555) center / 100% 2px no-repeat;
}

.zoom input::-webkit-slider-thumb {
  appearance: none;
  width: 10px;
  height: 18px;
  background: #d6d1ca;
  border: 1px solid;
  border-color: #fff #444 #444 #fff;
  border-radius: 0 0 5px 5px;
}

.grip {
  align-self: flex-end;
  margin-left: auto;
}

.cursor {
  left: 83px;
  top: 249px;
}

/* taskbar */
.taskbar {
  display: flex;
  gap: 8px;
  height: 44px;
  padding: 2px 2px 2px 1px;
  background: #d6d1ca;
  border-top: 1px solid #f4f2ee;
}

.start {
  display: flex;
  align-items: center;
  gap: 1px;
  width: 53px;
  padding: 0 2px;
  font-weight: bold;
}

.tasks {
  display: flex;
  flex: 1;
  gap: 2px;
}

.task {
  display: flex;
  align-items: center;
  justify-content: center;
  width: 48px;
  padding: 0;
}

.task.stacked {
  width: 44px;
  margin-right: 4px;
  box-shadow: inset -1px -1px #8a867f, 1px 0 #eee, 2px 0 #555, 3px 0 #eee, 4px 0 #555;
}

.task.flat {
  border: none;
  background: none;
}

.tray {
  display: flex;
  align-items: center;
  gap: 8px;
  width: 172px;
  padding: 0 2px 0 5px;
  border: 1px solid;
  border-color: #8a867f #fff #fff #8a867f;
}

.clock {
  flex: 1;
  text-align: center;
  line-height: 16px;
}
</style>
